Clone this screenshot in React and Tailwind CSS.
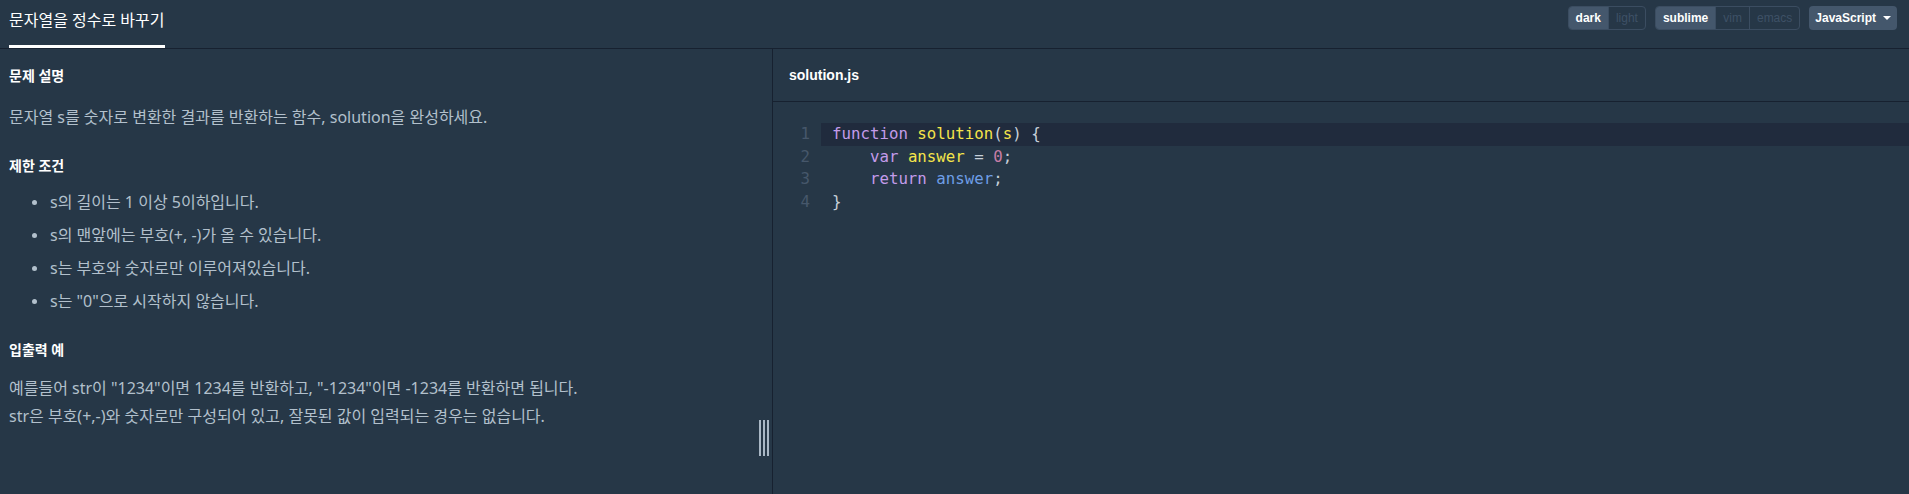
import React from "react";

const bodyFont = { fontFamily: '"Noto Sans", "Noto Sans CJK KR", sans-serif' };

const rules = [
  "s의 길이는 1 이상 5이하입니다.",
  "s의 맨앞에는 부호(+, -)가 올 수 있습니다.",
  "s는 부호와 숫자로만 이루어져있습니다.",
  's는 "0"으로 시작하지 않습니다.',
];

// code lines as token lists [text, colour class]
const codeLines = [
  [
    ["function", "text-[#c39bea]"],
    [" ", ""],
    ["solution", "text-[#f5e54a]"],
    ["(", "text-[#c7d0da]"],
    ["s", "text-[#f5e54a]"],
    [") {", "text-[#c7d0da]"],
  ],
  [
    ["    ", ""],
    ["var", "text-[#c39bea]"],
    [" ", ""],
    ["answer", "text-[#f5e54a]"],
    [" = ", "text-[#c7d0da]"],
    ["0", "text-[#c77da6]"],
    [";", "text-[#c7d0da]"],
  ],
  [
    ["    ", ""],
    ["return", "text-[#c39bea]"],
    [" ", ""],
    ["answer", "text-[#6e9ee6]"],
    [";", "text-[#c7d0da]"],
  ],
  [["}", "text-[#c7d0da]"]],
];

const Segment = ({ items, active }) => (
  <div className="flex h-[24px] rounded-[4px] border border-[#3b4d61] overflow-hidden">
    {items.map((item) => (
      <div
        key={item}
        className={
          item === active
            ? "flex items-center px-[7px] bg-[#44576c] text-white font-bold"
            : "flex items-center px-[7px] text-[#3e5166] border-l border-[#3b4d61] first:border-l-0"
        }
      >
        {item}
      </div>
    ))}
  </div>
);

export default function App() {
  return (
    <div className="w-full h-[494px] bg-[#263747] flex flex-col overflow-hidden" style={bodyFont}>
      {/* top bar */}
      <div className="h-[49px] flex justify-between border-b border-[#172130] shrink-0">
        <div className="ml-[9px] pt-[8px] border-b-[3px] border-white h-[48px] text-white text-[16px] leading-[24px]">
          문자열을 정수로 바꾸기
        </div>
        <div
          className="flex items-start gap-[9px] pt-[6px] pr-[12px] text-[12px]"
          style={{ fontFamily: '"Liberation Sans", Arial, sans-serif' }}
        >
          <Segment items={["dark", "light"]} active="dark" />
          <Segment items={["sublime", "vim", "emacs"]} active="sublime" />
          <div className="flex items-center gap-[7px] h-[24px] px-[6px] rounded-[4px] bg-[#44576c] text-white font-bold">
            JavaScript
            <span className="w-0 h-0 border-l-[4px] border-r-[4px] border-t-[4px] border-l-transparent border-r-transparent border-t-white" />
          </div>
        </div>
      </div>

      <div className="flex flex-1 min-h-0">
        {/* problem description */}
        <div className="relative w-[773px] shrink-0 border-r border-[#172130] pl-[9px] pt-[17px]">
          <h2 className="text-white font-bold text-[14px] leading-[20px]">문제 설명</h2>
          <p className="mt-[17px] text-[#b2c0cc] text-[16px] leading-[28px]">
            문자열 s를 숫자로 변환한 결과를 반환하는 함수, solution을 완성하세요.
          </p>
          <h2 className="mt-[25px] text-white font-bold text-[14px] leading-[20px]">제한 조건</h2>
          <ul className="mt-[14px] flex flex-col gap-[9px]">
            {rules.map((rule) => (
              <li key={rule} className="flex items-center text-[#b2c0cc] text-[16px] leading-[24px]">
                <span className="ml-[23px] mr-[13px] w-[5px] h-[5px] rounded-full bg-[#b2c0cc]" />
                {rule}
              </li>
            ))}
          </ul>
          <h2 className="mt-[27px] text-white font-bold text-[14px] leading-[20px]">입출력 예</h2>
          <p className="mt-[14px] text-[#b2c0cc] text-[16px] leading-[28px]">
            예를들어 str이 "1234"이면 1234를 반환하고, "-1234"이면 -1234를 반환하면 됩니다.
            <br />
            str은 부호(+,-)와 숫자로만 구성되어 있고, 잘못된 값이 입력되는 경우는 없습니다.
          </p>

          {/* resize handle */}
          <div className="absolute right-[3px] top-[371px] flex gap-[2px]">
            <span className="w-[2px] h-[36px] bg-[#a9b7c5]" />
            <span className="w-[2px] h-[36px] bg-[#a9b7c5]" />
            <span className="w-[2px] h-[36px] bg-[#a9b7c5]" />
          </div>
        </div>

        {/* editor */}
        <div className="flex-1 flex flex-col min-w-0">
          <div className="h-[53px] shrink-0 border-b border-[#172130] flex items-center pl-[16px] text-white font-bold text-[14px]"
            style={{ fontFamily: '"Liberation Sans", Arial, sans-serif' }}>
            solution.js
          </div>
          <div
            className="pt-[21px] text-[15.75px] leading-[22.5px]"
            style={{ fontFamily: '"DejaVu Sans Mono", monospace' }}
          >
            {codeLines.map((tokens, i) => (
              <div key={i} className="flex">
                <div className="w-[48px] shrink-0 pr-[11px] text-right text-[#46576b]">{i + 1}</div>
                <div className={i === 0 ? "flex-1 pl-[11px] bg-[#202b3d] whitespace-pre" : "flex-1 pl-[11px] whitespace-pre"}>
                  {tokens.map(([t, c], j) => (
                    <span key={j} className={c}>
                      {t}
                    </span>
                  ))}
                </div>
              </div>
            ))}
          </div>
        </div>
      </div>
    </div>
  );
}
